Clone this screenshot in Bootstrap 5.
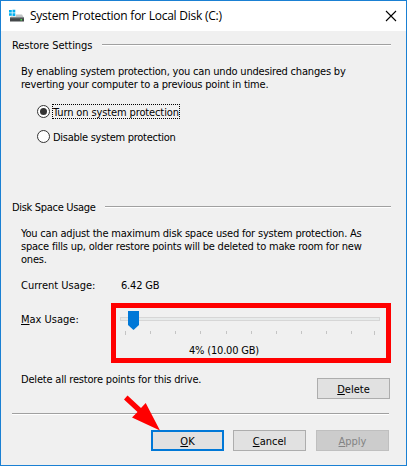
<!DOCTYPE html>
<html lang="en">
<head>
<meta charset="utf-8">
<meta name="viewport" content="width=device-width, initial-scale=1">
<title>System Protection for Local Disk (C:)</title>
<link href="https://cdn.jsdelivr.net/npm/bootstrap@5.3.0/dist/css/bootstrap.min.css" rel="stylesheet">
<style>
body{width:407px;height:466px;overflow:hidden;background:#f0f0f0;color:#000;font:11px/13px "DejaVu Sans Condensed","DejaVu Sans",sans-serif;letter-spacing:-.19px}
.dialog{width:407px;height:466px;border:1px solid #1a80d3;white-space:nowrap}
.titlebar{height:30px;padding:0 9px 0 7px;background:#fff}
.caption{font:12px/16px "Open Sans",sans-serif;letter-spacing:-.24px;margin:0 0 0 6px}
.close-btn{width:12px;height:12px}
.client{padding:8px 15px 0 11px}
.section-title{font-size:11px;line-height:13px;font-weight:400;margin:0}
.section-title.wide-set{letter-spacing:-.05px}
.section-title.tight-set{letter-spacing:-.31px}
.rule{height:2px;background:#a0a0a0;border-bottom:1px solid #fff}
.section-title + .rule{margin-top:5px}
.rule-restore{max-width:289px}
.rule-usage{max-width:286px}
.copy{padding-left:9px}
.intro{margin-top:13px}
.tracked-2{letter-spacing:-.21px}
.choices{margin-top:13px;padding-left:25px}
.choice{height:15px;margin-bottom:10px;cursor:pointer}
.choice span{height:15px;padding:2px 1px 0;margin-left:2px;letter-spacing:-.27px}
.choice .chosen{outline:1px dotted #000;outline-offset:-1px;letter-spacing:-.12px;width:128px}
.usage-head{margin-top:47px}
.usage-copy{margin-top:13px}
.current{margin-top:13px}
.field{width:100px;letter-spacing:0}
.limit{margin-top:11px}
.limit .field{width:90px;padding-top:10px}
.meter{width:280px;height:60px;border:5px solid #f00;padding:2px 4px 0}
.readout{margin:5px 0 0 69px}
.purge{margin-top:10px}
.purge .btn{margin:5px 1px 0 0}
.win-btn{width:73px;height:21px;border:1px solid #adadad;background:#e1e1e1;color:#000;border-radius:0;padding:2px 0 0;font-size:11px;line-height:17px}
.win-ok{border:2px solid #0078d7;padding-top:1px;line-height:17px}
.win-off,.win-off:disabled{background:#ccc;border-color:#bfbfbf;color:#838383;opacity:1;margin-left:1px}
.divider{margin:14px 2px 0 0}
.actions{margin-top:15px;gap:9px;padding-right:2px}
.pointer{left:120px;top:392px}
u{text-underline-offset:1px;text-decoration-thickness:1px}
</style>
</head>
<body>
<main class="dialog d-flex flex-column position-relative">
  <header class="titlebar d-flex align-items-center">
    <svg width="16" height="16" viewBox="0 0 16 16" aria-hidden="true">
      <path d="M4 6.500H14L16 10H2z" fill="#c0c3c4"/>
      <path d="M2 9.500H16V13.500H2z" fill="#44484a"/>
      <path d="M2 9.800H16" stroke="#85898b" stroke-width=".8"/>
      <path d="M12.500 11h1.500v1.500h-1.500z" fill="#50e050"/>
      <path d="M.500 1.500h7.500v7H.5z" fill="#fff"/>
      <path d="M1 2h2.800v2.600H1zM4.500 1.700H7.300v2.900H4.500zM1 5.300h2.800v2.500H1zM4.500 5.300H7.300V8H4.500z" fill="#00aeef"/>
    </svg>
    <h1 class="caption">System Protection for Local Disk (C:)</h1>
    <svg class="close-btn ms-auto" viewBox="0 0 12 12" role="button" aria-label="Close"><path d="M1 1l10 10M11 1L1 11" stroke="#000" stroke-width="1.1"/></svg>
  </header>
  <section class="client d-flex flex-column">
    <div class="d-flex"><h2 class="section-title wide-set">Restore Settings</h2><div class="rule rule-restore flex-grow-1 ms-auto"></div></div>
    <p class="copy intro mb-0">By enabling system protection, you can undo undesired changes by<br><span class="tracked-2">reverting your computer to a previous point in time.</span></p>
    <div class="choices">
      <div class="choice d-flex align-items-center">
        <svg width="13" height="13" viewBox="0 0 13 13"><circle cx="6.500" cy="6.500" r="6" fill="#fff" stroke="#333"/><circle cx="6.500" cy="6.500" r="3.500" fill="#333"/></svg>
        <span class="chosen">Turn on system protection</span>
      </div>
      <div class="choice d-flex align-items-center">
        <svg width="13" height="13" viewBox="0 0 13 13"><circle cx="6.500" cy="6.500" r="6" fill="#fff" stroke="#333"/></svg>
        <span>Disable system protection</span>
      </div>
    </div>
    <div class="usage-head d-flex"><h2 class="section-title tight-set">Disk Space Usage</h2><div class="rule rule-usage flex-grow-1 ms-auto"></div></div>
    <p class="copy usage-copy mb-0">You can adjust the maximum disk space used for system protection. As<br><span class="tracked-2">space fills up, older restore points will be deleted to make room for new</span><br>ones.</p>
    <div class="copy current d-flex"><div class="field">Current Usage:</div><div>6.42 GB</div></div>
    <div class="copy limit d-flex">
      <div class="field"><u>M</u>ax Usage:</div>
      <div class="meter flex-shrink-0">
        <svg class="d-block" width="261" height="29" viewBox="0 0 261 29" shape-rendering="crispEdges">
          <path d="M.5 7.500h259v3H.5z" fill="#e7eaea" stroke="#d6d6d6"/>
          <path d="M5.500 21v4M30.500 21v3M55.500 21v3M80.500 21v3M106.500 21v3M131.500 21v3M156.500 21v3M181.500 21v3M206.500 21v3M231.500 21v3M254.500 21v4" stroke="#c4c4c4"/>
          <path d="M8 1h11v14l-5.500 5L8 15z" fill="#0078d7" shape-rendering="auto"/>
        </svg>
        <div class="readout">4% (10.00 GB)</div>
      </div>
    </div>
    <div class="copy purge d-flex justify-content-between align-items-start"><div>Delete all restore points for this drive.</div><button class="btn win-btn"><u>D</u>elete</button></div>
    <div class="rule divider"></div>
    <div class="actions d-flex justify-content-end">
      <button class="btn win-btn win-ok"><u>O</u>K</button>
      <button class="btn win-btn"><u>C</u>ancel</button>
      <button class="btn win-btn win-off" disabled><u>A</u>pply</button>
    </div>
  </section>
  <svg class="pointer position-absolute" width="44" height="42" viewBox="121 393 44 42" aria-hidden="true"><path d="M127.500 395.500L141 408 145.700 403 160 430.500 132 417.500 137.500 412 124 399.500z" fill="#f00"/></svg>
</main>
<script src="https://cdn.jsdelivr.net/npm/bootstrap@5.3.0/dist/js/bootstrap.bundle.min.js"></script>
</body>
</html>
